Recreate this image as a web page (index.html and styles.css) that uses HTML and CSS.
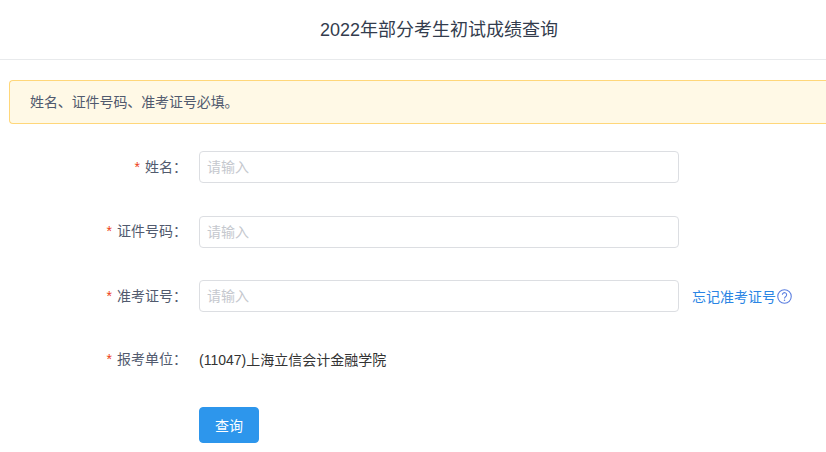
FILE: index.html
```html
<!DOCTYPE html>
<html lang="zh-CN">
<head>
<meta charset="utf-8">
<title>2022年部分考生初试成绩查询</title>
<link rel="stylesheet" href="styles.css">
</head>
<body>
<header class="header">2022年部分考生初试成绩查询</header>
<main class="content">
  <div class="alert">姓名、证件号码、准考证号必填。</div>
  <form class="form">
    <div class="row">
      <label class="label"><span class="star">*</span>姓名：</label>
      <input class="input" placeholder="请输入">
    </div>
    <div class="row">
      <label class="label"><span class="star">*</span>证件号码：</label>
      <input class="input" placeholder="请输入">
    </div>
    <div class="row">
      <label class="label"><span class="star">*</span>准考证号：</label>
      <input class="input" placeholder="请输入">
      <a class="link">忘记准考证号<svg class="help" viewBox="0 0 14 14" width="15" height="15"><circle cx="7" cy="7" r="6.3" fill="none" stroke="currentColor" stroke-width="1"/><path d="M5 5.4a2 2 0 1 1 3.2 1.6c-.8.6-1.2.9-1.2 1.9" fill="none" stroke="currentColor" stroke-width="1"/><circle cx="7" cy="10.6" r=".7" fill="currentColor"/></svg></a>
    </div>
    <div class="row row-text">
      <label class="label"><span class="star">*</span>报考单位：</label>
      <span class="value">(11047)上海立信会计金融学院</span>
    </div>
    <div class="actions">
      <button class="btn" type="button">查询</button>
    </div>
  </form>
</main>
</body>
</html>
```
FILE: styles.css
```css
* { box-sizing: border-box; }
html, body { margin: 0; padding: 0; overflow: hidden; background: #fff; }
body {
  width: 826px;
  height: 452px;
  font-family: "Liberation Sans", "Noto Sans CJK SC", sans-serif;
  font-size: 14px;
  color: #515a6e;
}
.header {
  height: 60px;
  line-height: 60px;
  padding-left: 52px;
  border-bottom: 1px solid #e8eaec;
  text-align: center;
  font-size: 18px;
  color: #333c4d;
}
.content { padding: 20px 0 0 9px; }
.alert {
  height: 44px;
  line-height: 42px;
  padding-left: 20px;
  background: #fff9e6;
  border: 1px solid #ffd77a;
  border-right: 0;
  border-radius: 4px 0 0 4px;
  font-size: 14px;
  letter-spacing: -0.1px;
  margin-bottom: 27px;
}
.row {
  display: flex;
  align-items: center;
  height: 32px;
  margin-bottom: 32.5px;
}
.row-text { height: 29px; margin-bottom: 33.5px; }
.label {
  width: 190px;
  padding: 0 12px 3px 0;
  flex: none;
  text-align: right;
  font-size: 14px;
  color: #515a6e;
}
.row-text .label { padding-bottom: 2px; }
.star {
  color: #ed4014;
  font-family: "Liberation Sans", sans-serif;
  margin-right: 5px;
}
.input {
  width: 480px;
  height: 32px;
  padding: 4px 8px 4px 7px;
  border: 1px solid #dcdee2;
  border-radius: 4px;
  outline: none;
  font-family: inherit;
  font-size: 14px;
  background: #fff;
}
.input::placeholder { color: #c5c8ce; opacity: 1; }
.link {
  display: flex;
  align-items: center;
  margin-left: 13px;
  color: #2b85e4;
  font-size: 14px;
}
.help { margin-left: 1px; color: #5b7fe0; }
.value { color: #333; font-size: 14px; }
.actions { padding-left: 190px; }
.btn {
  display: block;
  width: 60px;
  height: 36px;
  border: 1px solid #2d96ec;
  border-radius: 4px;
  background: #2d96ec;
  color: #fff;
  font-family: inherit;
  font-size: 14px;
  padding: 0;
}
```
